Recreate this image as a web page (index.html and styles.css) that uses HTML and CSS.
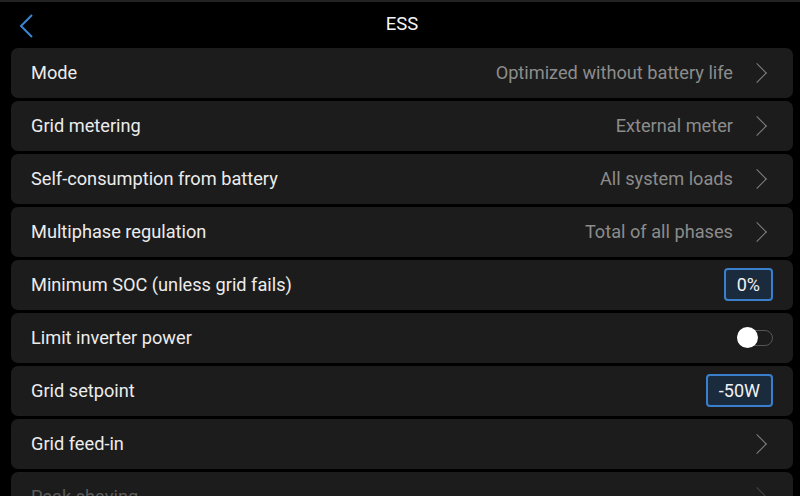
FILE: index.html
```html
<!DOCTYPE html>
<html lang="en">
<head>
    <meta charset="UTF-8">
    <meta name="viewport" content="width=device-width, initial-scale=1.0">
    <title>ESS</title>
    <link rel="stylesheet" href="styles.css">
</head>
<body>
    <div class="status-strip"></div>
    <header class="header">
        <button class="back" aria-label="Back">
            <svg width="16" height="24" viewBox="0 0 16 24">
                <path d="M13 1 L2 12 L13 23" fill="none" stroke="#3b86d4" stroke-width="2" />
            </svg>
        </button>
        <h1 class="title">ESS</h1>
    </header>

    <div class="list">
        <div class="row">
            <span class="label">Mode</span>
            <span class="value">Optimized without battery life</span>
            <span class="chevron"></span>
        </div>
        <div class="row">
            <span class="label">Grid metering</span>
            <span class="value">External meter</span>
            <span class="chevron"></span>
        </div>
        <div class="row">
            <span class="label">Self-consumption from battery</span>
            <span class="value">All system loads</span>
            <span class="chevron"></span>
        </div>
        <div class="row">
            <span class="label">Multiphase regulation</span>
            <span class="value">Total of all phases</span>
            <span class="chevron"></span>
        </div>
        <div class="row">
            <span class="label">Minimum SOC (unless grid fails)</span>
            <span class="spinbox">0%</span>
        </div>
        <div class="row">
            <span class="label">Limit inverter power</span>
            <span class="switch"><span class="knob"></span></span>
        </div>
        <div class="row">
            <span class="label">Grid setpoint</span>
            <span class="spinbox">-50W</span>
        </div>
        <div class="row">
            <span class="label">Grid feed-in</span>
            <span class="chevron"></span>
        </div>
        <div class="row dim">
            <span class="label">Peak shaving</span>
            <span class="chevron"></span>
        </div>
    </div>
</body>
</html>
```

FILE: styles.css
```css
body {
    margin: 0;
    background-color: #000;
    font-family: 'Roboto', 'Noto Sans', sans-serif;
    color: #f2f2f2;
    width: 800px;
    height: 496px;
    overflow: hidden;
}

.status-strip {
    height: 2px;
    background-color: #232323;
}

.header {
    height: 46px;
    display: flex;
    align-items: center;
    justify-content: center;
    position: relative;
}

.back {
    position: absolute;
    left: 17px;
    top: 11px;
    background: none;
    border: 0;
    padding: 0;
    width: 20px;
    height: 26px;
    display: flex;
    align-items: center;
    justify-content: center;
}

.title {
    margin: 0 0 0 4px;
    margin-top: -2px;
    font-size: 18.5px;
    font-weight: 400;
    color: #f5f5f5;
}

.list {
    display: flex;
    flex-direction: column;
    gap: 3.5px;
    padding: 0 7px 0 11px;
    position: relative;
}

.list::after {
    content: '';
    position: absolute;
    left: 0;
    right: 0;
    bottom: -40px;
    height: 60px;
    background: linear-gradient(to bottom, rgba(0, 0, 0, 0), rgba(0, 0, 0, 0.45));
}

.row {
    height: 49.5px;
    flex-shrink: 0;
    background-color: #1c1c1c;
    border-radius: 7px;
    display: flex;
    align-items: center;
    padding: 0 20px 0 20px;
    font-size: 18.2px;
}

.label {
    flex: 1;
    color: #ececec;
}

.value {
    color: #8c8c8c;
    margin-right: 22px;
}

.chevron {
    width: 10px;
    height: 20px;
    margin-right: 8px;
    position: relative;
}

.chevron::before {
    content: '';
    position: absolute;
    width: 13px;
    height: 13px;
    border-top: 1.6px solid #7f7f7f;
    border-right: 1.6px solid #7f7f7f;
    transform: rotate(45deg);
    top: 3px;
    left: -5px;
}

.spinbox {
    min-width: 23px;
    height: 29px;
    padding: 0 11px;
    border: 2px solid #3a7fcc;
    border-radius: 4px;
    background-color: #1a2b3e;
    color: #f2f2f2;
    display: flex;
    align-items: center;
    justify-content: center;
    font-size: 18px;
}

.switch {
    width: 36px;
    height: 16px;
    border: 1.5px solid #555;
    border-radius: 9px;
    position: relative;
    box-sizing: border-box;
}

.knob {
    position: absolute;
    left: -1px;
    top: -4px;
    width: 21px;
    height: 21px;
    border-radius: 50%;
    background-color: #fff;
}

.dim .label {
    color: #5a5a5a;
}

.dim .chevron::before {
    border-color: #444;
}
```
